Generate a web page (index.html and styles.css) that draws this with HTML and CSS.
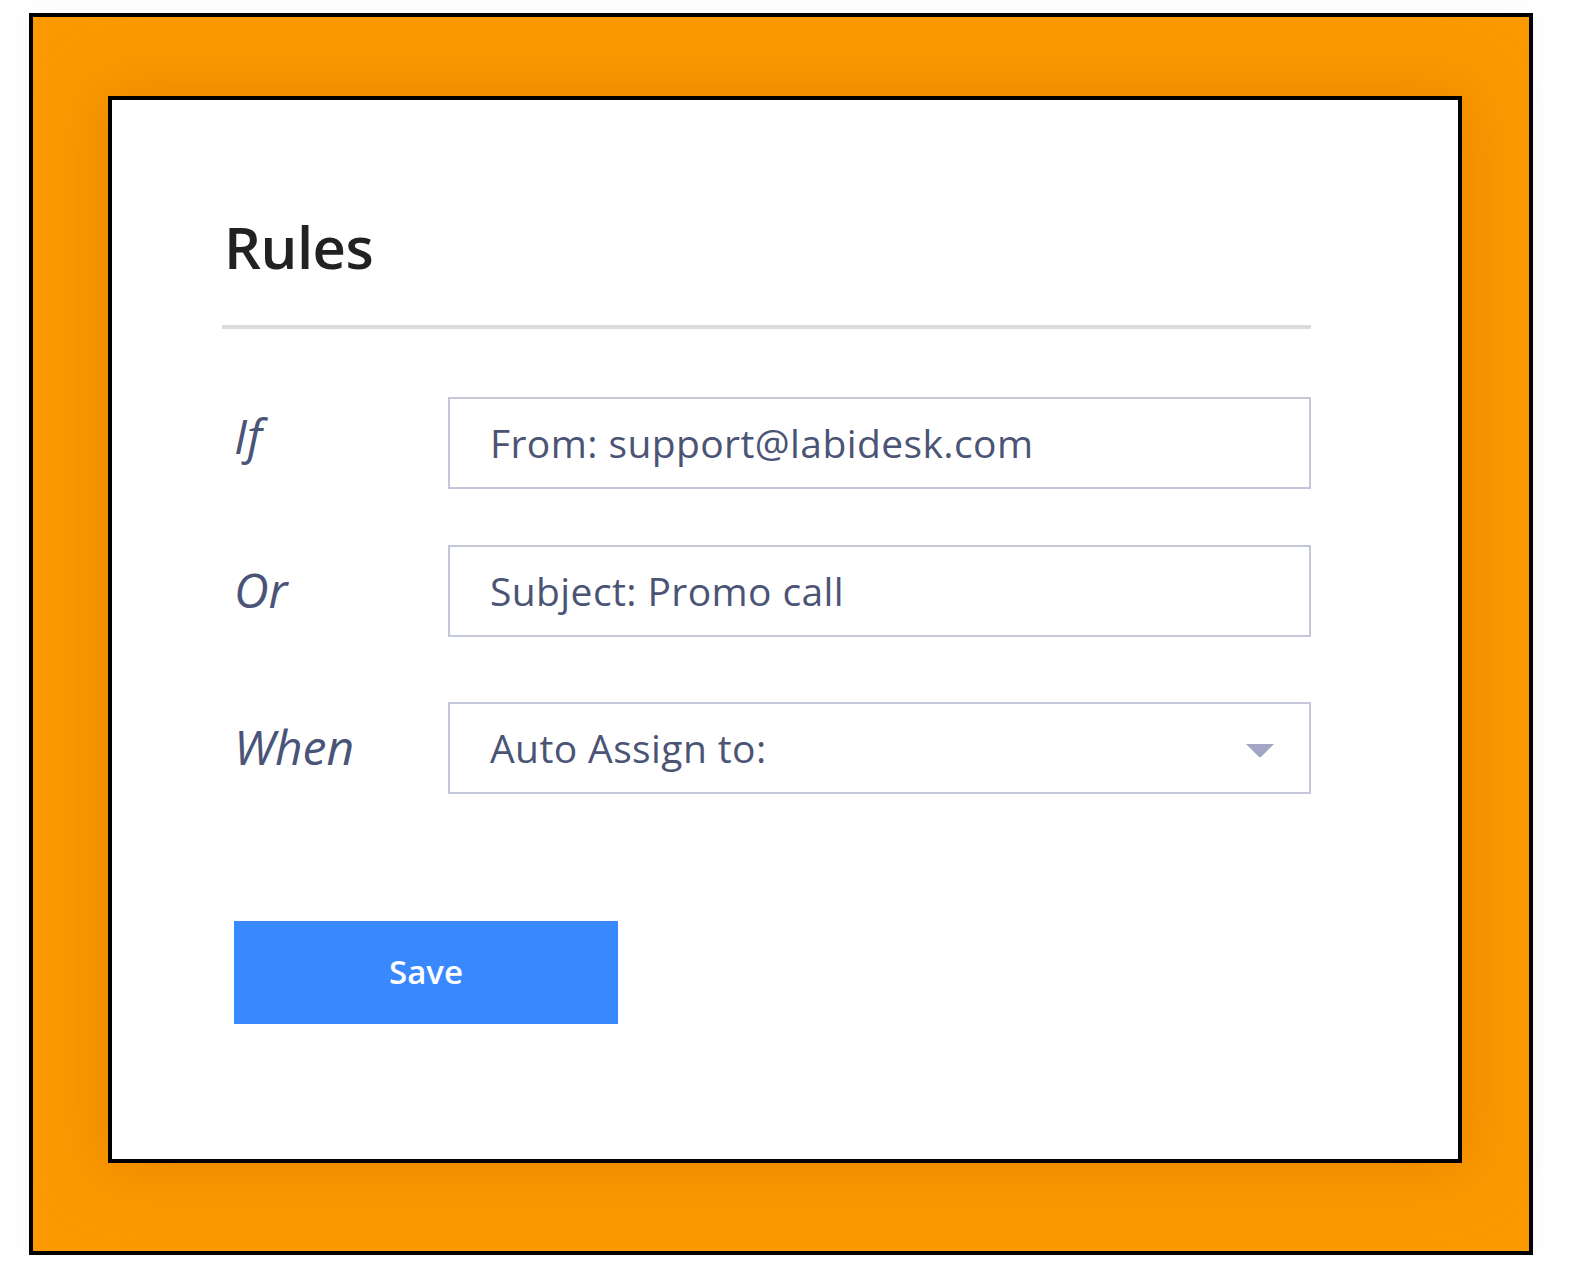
FILE: index.html
```html
<!DOCTYPE html>
<html lang="en">
<head>
<meta charset="utf-8">
<title>Rules</title>
<link rel="stylesheet" href="styles.css">
</head>
<body>
<div class="frame">
  <div class="card">
    <h1 class="title">Rules</h1>
    <div class="divider"></div>
    <div class="rows">
      <div class="row row-if">
        <span class="label label-if">If</span>
        <div class="field">From: support@labidesk.com</div>
      </div>
      <div class="row row-or">
        <span class="label">Or</span>
        <div class="field">Subject: Promo call</div>
      </div>
      <div class="row row-when">
        <span class="label">When</span>
        <div class="field field-select">
          <span>Auto Assign to:</span>
          <svg class="caret" width="30" height="15" viewBox="0 0 30 15"><path d="M1 1 H29 L16.5 13.5 Q15 15 13.5 13.5 Z" fill="#a0a6c4"/></svg>
        </div>
      </div>
    </div>
    <button class="save">Save</button>
  </div>
</div>
</body>
</html>
```

FILE: styles.css
```css
html, body {
  margin: 0;
  padding: 0;
  background: #ffffff;
}

body {
  font-family: "Open Sans", "Noto Sans", sans-serif;
  padding: 13px 0 0 29px;
}

.frame {
  box-sizing: border-box;
  width: 1504px;
  height: 1242px;
  border: 4px solid #000;
  background: #fc9900;
  padding: 79px 67px 0 75px;
  box-shadow: 0 0 30px rgba(0, 0, 0, 0.03);
}

.card {
  box-sizing: border-box;
  width: 1354px;
  height: 1067px;
  border: 4px solid #000;
  background: #fff;
  box-shadow: 0 0 60px 10px rgba(200, 110, 0, 0.35);
  padding: 0 147px 0 110px;
  display: flex;
  flex-direction: column;
}

.title {
  margin: 106px 0 0 2px;
  font-size: 58px;
  line-height: 82px;
  font-weight: 600;
  color: #222222;
  letter-spacing: -0.5px;
}

.divider {
  margin-top: 37px;
  height: 4px;
  background: #dadada;
}

.rows {
  display: flex;
  flex-direction: column;
  margin-top: 68px;
}

.row {
  display: flex;
  align-items: center;
}

.row-or { margin-top: 56px; }
.row-when { margin-top: 65px; }

.label {
  width: 226px;
  padding-left: 12px;
  font-size: 48px;
  font-style: italic;
  color: #4a5478;
  box-sizing: border-box;
  margin-top: -4px;
}

.label-if {
  margin-top: -16px;
}

.field {
  flex: 1;
  box-sizing: border-box;
  height: 92px;
  border: 2px solid #c3c7d9;
  display: flex;
  align-items: center;
  padding: 0 34px 2px 40px;
  font-size: 39px;
  color: #4b5475;
  letter-spacing: 0.4px;
}

.field-select {
  justify-content: space-between;
}

.caret {
  display: block;
  margin-top: 6px;
}

.save {
  align-self: flex-start;
  margin: 127px 0 0 12px;
  width: 384px;
  height: 103px;
  border: none;
  background: #3a88fe;
  color: #ffffff;
  font-family: "Open Sans", "Noto Sans", sans-serif;
  font-size: 33px;
  font-weight: 600;
  padding: 0 0 2px 0;
  cursor: pointer;
}
```
